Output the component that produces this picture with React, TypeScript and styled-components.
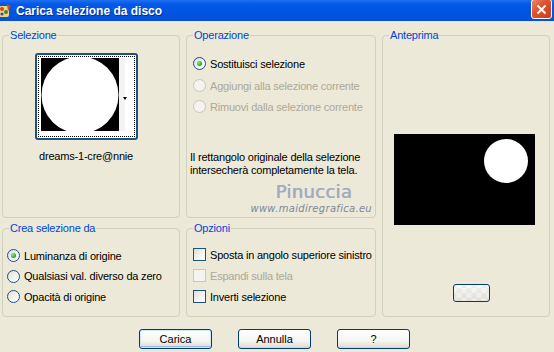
import React from "react";
import styled, { createGlobalStyle } from "styled-components";

const GlobalStyle = createGlobalStyle`
  html, body {
    margin: 0;
    padding: 0;
    background: #ece9d8;
  }
`;

const Window = styled.div`
  position: relative;
  width: 554px;
  height: 352px;
  background: #ece9d8;
  display: flex;
  flex-flow: column nowrap;
  overflow: hidden;
  font-family: "Liberation Sans", Arial, sans-serif;
  font-size: 11px;
  letter-spacing: -0.2px;
  color: #000;
`;

const TitleBar = styled.div`
  height: 21px;
  flex: none;
  display: flex;
  align-items: center;
  background: linear-gradient(#1f6ff0 0%, #0458e6 20%, #0053e0 80%, #0a4fd0 100%);
`;

const TitleText = styled.span`
  margin-left: 4px;
  color: #fff;
  font-family: "Liberation Sans", Arial, sans-serif;
  font-weight: bold;
  font-size: 12px;
  letter-spacing: 0;
  text-shadow: 1px 1px #0a2d8a;
  flex: 1;
`;

const CloseButton = styled.div`
  width: 19px;
  height: 18px;
  margin-right: 2px;
  margin-top: -3px;
  border: 1px solid #fff;
  border-radius: 3px;
  background: linear-gradient(135deg, #e98a6e 0%, #e0532f 40%, #c63f1b 100%);
  display: flex;
  align-items: center;
  justify-content: center;
`;

const Body = styled.div`
  display: grid;
  grid-template-columns: 178px 190px 168px;
  grid-template-rows: 189px 95px;
  column-gap: 6px;
  row-gap: 4px;
  padding: 8px 0 0 2px;
`;

const Group = styled.fieldset<{ $col: number; $row: string }>`
  margin: 0;
  padding: 0;
  min-width: 0;
  border: 1px solid #d0d0bf;
  border-radius: 4px;
  grid-column: ${(p) => p.$col};
  grid-row: ${(p) => p.$row};
  display: flex;
  flex-flow: column nowrap;
`;

const Legend = styled.legend`
  color: #0046d5;
  padding: 0 1px;
  margin-left: 6px;
  line-height: 13px;
`;

const SelectionBody = styled.div`
  display: flex;
  flex-flow: column nowrap;
  align-items: center;
  padding: 11px 10px 0 0;
`;

const ThumbBox = styled.div`
  width: 97px;
  height: 81px;
  border: 2px solid #1c5180;
  border-radius: 3px;
  background: #fff;
  padding: 1px;
`;

const ThumbInner = styled.div`
  width: 100%;
  height: 100%;
  box-sizing: border-box;
  border: 1px dotted #000;
  display: flex;
  align-items: stretch;
  overflow: hidden;
`;

const ThumbLabel = styled.div`
  margin-top: 10px;
  font-size: 11px;
`;

const OptionList = styled.div<{ $left: number; $top: number }>`
  display: flex;
  flex-flow: column nowrap;
  padding: ${(p) => p.$top}px 0 0 ${(p) => p.$left}px;
`;

const OptionRow = styled.div<{ $disabled?: boolean; $h: number }>`
  display: flex;
  align-items: center;
  height: ${(p) => p.$h}px;
  gap: 4px;
  color: ${(p) => (p.$disabled ? "#aca899" : "#000")};
  white-space: nowrap;
`;

const RadioDot = styled.span<{ $checked?: boolean; $disabled?: boolean }>`
  box-sizing: border-box;
  width: 13px;
  height: 13px;
  border-radius: 50%;
  border: 1px solid ${(p) => (p.$disabled ? "#cac8bb" : "#1c5180")};
  background: ${(p) =>
    p.$disabled
      ? "#f4f3ee"
      : "linear-gradient(135deg, #dcdcd7 0%, #f5f5f2 60%, #ffffff 100%)"};
  display: flex;
  align-items: center;
  justify-content: center;
  flex: none;

  &::after {
    content: "";
    display: ${(p) => (p.$checked ? "block" : "none")};
    width: 5px;
    height: 5px;
    border-radius: 50%;
    background: radial-gradient(circle at 35% 35%, #8ee68e, #21a121 70%);
  }
`;

const CheckBox = styled.span<{ $disabled?: boolean }>`
  box-sizing: border-box;
  width: 13px;
  height: 13px;
  border: 1px solid ${(p) => (p.$disabled ? "#cac8bb" : "#1c5180")};
  background: ${(p) =>
    p.$disabled
      ? "#f4f3ee"
      : "linear-gradient(135deg, #dcdcd7 0%, #f5f5f2 60%, #ffffff 100%)"};
  flex: none;
`;

const Note = styled.div`
  margin: auto 0 0 3px;
  padding-bottom: 40px;
  line-height: 13px;
  white-space: nowrap;
`;

const PreviewBody = styled.div`
  display: flex;
  flex-flow: column nowrap;
  padding: 92px 0 0 11px;
`;

const PreviewCanvas = styled.div`
  width: 141px;
  height: 91px;
  background: #000;
  position: relative;
`;

const PreviewSpot = styled.div`
  position: absolute;
  left: 90px;
  top: 5px;
  width: 44px;
  height: 44px;
  border-radius: 50%;
  background: #fff;
`;

const SmallButton = styled.div`
  width: 35px;
  height: 16px;
  margin: 59px 0 0 59px;
  border: 1px solid #003c74;
  border-radius: 3px;
  background:
    linear-gradient(rgba(255, 255, 255, 0.45), rgba(214, 208, 197, 0.35)),
    repeating-conic-gradient(#f6f6f3 0% 25%, #e4e4e0 0% 50%) 50% / 10px 10px;
`;

const ButtonRow = styled.div`
  display: flex;
  justify-content: center;
  gap: 26px;
  padding: 12px 5px 0 0;
`;

const PushButton = styled.button<{ $default?: boolean }>`
  width: 73px;
  height: 20px;
  padding: 0;
  border: 1px solid #003c74;
  border-radius: 3px;
  background: linear-gradient(#ffffff 0%, #f4f4f0 60%, #e3e1d9 90%, #d6d0c5 100%);
  font-family: "Liberation Sans", Arial, sans-serif;
  font-size: 11px;
  color: #000;
  box-shadow: ${(p) =>
    p.$default ? "inset 0 0 0 1px #cee7ff, inset 0 -1px 0 1px #98b8ea" : "none"};
`;

const Watermark = styled.div`
  position: absolute;
  left: 246px;
  top: 181px;
  display: flex;
  flex-flow: column nowrap;
  align-items: flex-end;
  width: 126px;
  pointer-events: none;
  letter-spacing: 0;
`;

const WatermarkName = styled.span`
  font-family: "DejaVu Sans", sans-serif;
  font-size: 18px;
  color: #a3aac0;
  text-shadow: 0.6px 0 #a3aac0;
  margin-right: 20px;
  letter-spacing: 0.3px;
`;

const WatermarkUrl = styled.span`
  font-family: "DejaVu Sans", sans-serif;
  font-style: italic;
  font-size: 10px;
  color: #808899;
  margin-top: 1px;
  letter-spacing: 0.3px;
`;

const AppIcon = () => (
  <svg width="14" height="16" viewBox="0 0 14 16" style={{ marginLeft: -2 }}>
    <rect x="1" y="3" width="10" height="11" rx="2" fill="#f3d27a" />
    <circle cx="4" cy="6" r="2" fill="#e04020" />
    <circle cx="8" cy="9" r="2" fill="#2f8f2f" />
    <circle cx="4" cy="11" r="1.6" fill="#2050d0" />
    <path d="M9 1 L13 3 L10 8 Z" fill="#c0502a" />
  </svg>
);

const CloseX = () => (
  <svg width="11" height="11" viewBox="0 0 11 11">
    <path d="M1.5 1.5 L9.5 9.5 M9.5 1.5 L1.5 9.5" stroke="#fff" strokeWidth="2" />
  </svg>
);

const ThumbPicture = () => (
  <svg width="89" height="75" viewBox="0 0 89 75" style={{ display: "block" }}>
    <rect x="0" y="0" width="89" height="75" fill="#fff" />
    <rect x="2" y="1" width="78" height="73" fill="#000" />
    <rect x="80" y="1" width="6" height="73" fill="#f3f3f3" />
    <circle cx="41" cy="38" r="38.5" fill="#fff" />
    <rect x="0" y="0" width="2" height="75" fill="#fff" />
    <path d="M84 40 L88 40 L86 43 Z" fill="#000" />
  </svg>
);

export default function App() {
  return (
    <Window>
      <GlobalStyle />
      <TitleBar>
        <AppIcon />
        <TitleText>Carica selezione da disco</TitleText>
        <CloseButton>
          <CloseX />
        </CloseButton>
      </TitleBar>
      <Body>
        <Group $col={1} $row="1">
          <Legend>Selezione</Legend>
          <SelectionBody>
            <ThumbBox>
              <ThumbInner>
                <ThumbPicture />
              </ThumbInner>
            </ThumbBox>
            <ThumbLabel>dreams-1-cre@nnie</ThumbLabel>
          </SelectionBody>
        </Group>
        <Group $col={2} $row="1">
          <Legend>Operazione</Legend>
          <OptionList $left={6} $top={10}>
            <OptionRow $h={23}>
              <RadioDot $checked />
              Sostituisci selezione
            </OptionRow>
            <OptionRow $h={21} $disabled>
              <RadioDot $disabled />
              Aggiungi alla selezione corrente
            </OptionRow>
            <OptionRow $h={21} $disabled>
              <RadioDot $disabled />
              Rimuovi dalla selezione corrente
            </OptionRow>
          </OptionList>
          <Note>
            Il rettangolo originale della selezione
            <br />
            intersecherà completamente la tela.
          </Note>
        </Group>
        <Group $col={3} $row="1 / span 2">
          <Legend>Anteprima</Legend>
          <PreviewBody>
            <PreviewCanvas>
              <PreviewSpot />
            </PreviewCanvas>
            <SmallButton />
          </PreviewBody>
        </Group>
        <Group $col={1} $row="2">
          <Legend>Crea selezione da</Legend>
          <OptionList $left={4} $top={10}>
            <OptionRow $h={21}>
              <RadioDot $checked />
              Luminanza di origine
            </OptionRow>
            <OptionRow $h={20}>
              <RadioDot />
              Qualsiasi val. diverso da zero
            </OptionRow>
            <OptionRow $h={21}>
              <RadioDot />
              Opacità di origine
            </OptionRow>
          </OptionList>
        </Group>
        <Group $col={2} $row="2">
          <Legend>Opzioni</Legend>
          <OptionList $left={6} $top={9}>
            <OptionRow $h={21}>
              <CheckBox />
              Sposta in angolo superiore sinistro
            </OptionRow>
            <OptionRow $h={21} $disabled>
              <CheckBox $disabled />
              Espandi sulla tela
            </OptionRow>
            <OptionRow $h={21}>
              <CheckBox />
              Inverti selezione
            </OptionRow>
          </OptionList>
        </Group>
      </Body>
      <ButtonRow>
        <PushButton $default>Carica</PushButton>
        <PushButton>Annulla</PushButton>
        <PushButton>?</PushButton>
      </ButtonRow>
      <Watermark>
        <WatermarkName>Pinuccia</WatermarkName>
        <WatermarkUrl>www.maidiregrafica.eu</WatermarkUrl>
      </Watermark>
    </Window>
  );
}
